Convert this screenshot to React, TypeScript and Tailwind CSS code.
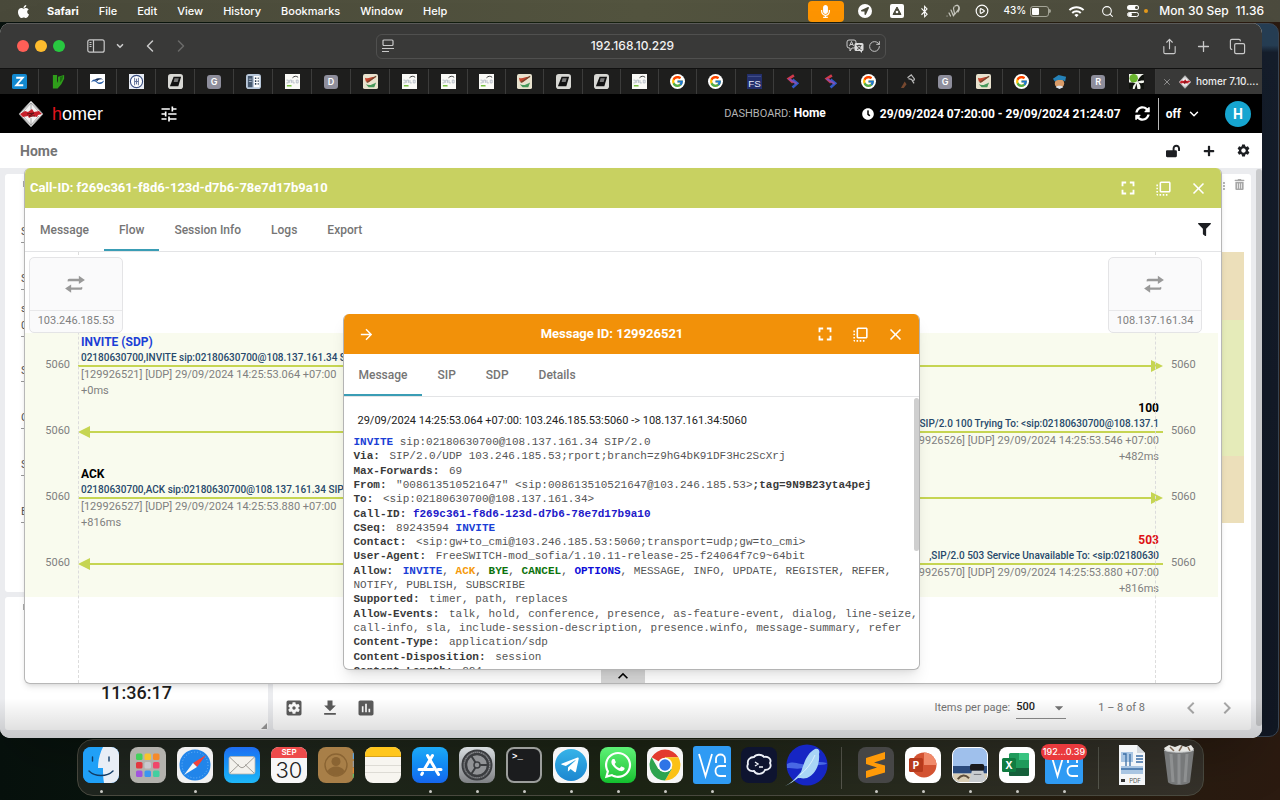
import React from "react";
import { FaBluetoothB, FaApple, FaClock, FaFilter, FaLockOpen, FaLocationArrow, FaMicrophone, FaPlus, FaSyncAlt, FaTrashAlt, FaWhatsapp, FaTelegramPlane } from "react-icons/fa";
import { FcGoogle } from "react-icons/fc";
import {
  MdArrowDropDown, MdArrowForward, MdAssessment, MdChevronLeft, MdChevronRight, MdClose, MdFileDownload,
  MdFlipToFront, MdFullscreen, MdKeyboardArrowUp, MdMoreVert, MdSettings, MdSettingsApplications, MdTune, MdWifi,
} from "react-icons/md";
import { ChevronDown, ChevronLeft, ChevronRight, CirclePlay, Copy, Plus, RotateCw, Search, Share, X } from "lucide-react";

/* ---------- macOS menu bar ---------- */

function MenuBar() {
  const menus = ["File", "Edit", "View", "History", "Bookmarks", "Window", "Help"];
  return (
    <header className="flex h-[22px] shrink-0 items-center justify-between bg-linear-to-r from-[#49493a] via-[#53543f] to-[#4b4a3d] pr-4 pl-4 font-[Inter,sans-serif] text-xs font-medium text-white">
      <nav className="flex items-center gap-5 text-[11px] whitespace-nowrap" aria-label="Menu bar">
        <FaApple className="-mr-1 size-[15px]" />
        <span className="font-bold">Safari</span>
        {menus.map((m) => (
          <span key={m}>{m}</span>
        ))}
      </nav>
      <div className="flex items-center whitespace-nowrap">
        <span className="mr-[14px] flex h-[21px] w-9 items-center justify-center rounded-[4px] bg-[#ff9500]">
          <FaMicrophone className="size-[13px]" />
        </span>
        <span className="mr-[18px] flex size-[14px] items-center justify-center rounded-full bg-white text-[#4b4b3c]">
          <FaLocationArrow className="size-2" />
        </span>
        <svg viewBox="0 0 14 14" className="mr-[14px] size-[14px]">
          <rect width="14" height="14" rx="2" fill="#fff" />
          <path d="M7 3 11 10.500H3Z" fill="#4b4b3c" stroke="#4b4b3c" strokeLinejoin="round" />
          <circle cx="7" cy="8" r="1.300" fill="#fff" />
        </svg>
        <FaBluetoothB className="mr-[14px] size-[13px]" />
        <svg viewBox="0 0 16 16" className="mr-[14px] size-4" fill="none" stroke="#c9c9c0" strokeWidth="1.200" strokeLinecap="round">
          <path d="M2 13h.1M4 10l1.500 3M6 7l2.500 6M9 4c-2 2 2 6 0 8M10 3c3-2 5 1 3 4l-3 4M12 2c3 1 3 4 1 7" />
        </svg>
        <CirclePlay className="mr-[15px] size-[14px]" />
        <span className="mr-1 text-[10px]">43%</span>
        <span className="flex h-[11px] w-[19px] rounded-[3px] border border-[#a5a598] p-px">
          <span className="w-[7px] rounded-[1px] bg-white" />
        </span>
        <span className="mr-[17px] h-1 w-[2px] rounded-r bg-[#a5a598]" />
        <MdWifi className="mr-4 size-[17px]" />
        <Search className="mr-3 size-[13px]" />
        <svg viewBox="0 0 14 14" className="mr-1 size-[14px]">
          <rect x="1" y="1" width="12" height="5" rx="2.500" fill="#fff" />
          <circle cx="10.500" cy="3.500" r="1.500" fill="#4b4b3c" />
          <rect x="1.500" y="8.500" width="11" height="4" rx="2" fill="none" stroke="#fff" />
          <circle cx="4" cy="10.500" r="2" fill="#fff" />
        </svg>
        <span className="mr-[11px] size-1 rounded-full bg-[#e59a1c]" />
        <span className="mr-[7px]">Mon 30 Sep</span>
        <span>11.36</span>
      </div>
    </header>
  );
}

/* ---------- Safari toolbar and tabs ---------- */

function Toolbar() {
  return (
    <div className="grid h-[45px] shrink-0 grid-cols-[1fr_510px_1fr] items-center border-t border-[#5a5a59] bg-[#393938] text-[#c9c9c9]">
      <div className="flex items-center pl-[17px]">
        <span className="mr-[6px] size-3 rounded-full bg-[#ff5f57]" />
        <span className="mr-[6px] size-3 rounded-full bg-[#febc2e]" />
        <span className="mr-[22px] size-3 rounded-full bg-[#28c840]" />
        <button aria-label="Sidebar" className="mr-[10px]">
          <svg viewBox="0 0 18 14" className="h-[14px] w-[18px]" fill="none" stroke="currentColor" strokeWidth="1.200">
            <rect x="0.800" y="0.800" width="16.400" height="12.400" rx="2" />
            <path d="M6.500 1v12M2.500 3.500h2M2.500 5.500h2M2.500 7.500h2" />
          </svg>
        </button>
        <button aria-label="Tab groups" className="mr-[15px]">
          <ChevronDown className="size-[10px]" strokeWidth={4} />
        </button>
        <button aria-label="Back" className="mr-[11px]">
          <ChevronLeft className="size-5" strokeWidth={1.800} />
        </button>
        <button aria-label="Forward" disabled className="text-[#6a6a69]">
          <ChevronRight className="size-5" strokeWidth={1.800} />
        </button>
      </div>
      <div className="flex h-[25px] items-center rounded-[6px] border border-[#50504f] px-1">
        <svg viewBox="0 0 14 14" className="size-[14px]" fill="none" stroke="currentColor" strokeWidth="1.200">
          <rect x="2" y="1" width="10" height="5.500" rx="1" />
          <path d="M1 9.500h12M1 12.500h7" />
        </svg>
        <input
          aria-label="Address"
          defaultValue="192.168.10.229"
          className="ml-6 min-w-0 flex-1 bg-transparent text-center font-[Inter,sans-serif] text-xs font-medium text-[#f2f2f2] outline-none"
        />
        <svg viewBox="0 0 18 14" className="mr-1 h-[14px] w-[18px]">
          <path d="M3 1h5a2 2 0 0 1 2 2v4a2 2 0 0 1-2 2H6l-2 3V9H3a2 2 0 0 1-2-2V3a2 2 0 0 1 2-2Z" fill="none" stroke="#c9c9c9" />
          <path d="M3.500 7 5.500 2.500 7.500 7M4 5.500h3" fill="none" stroke="#c9c9c9" />
          <path d="M10 4h6a1.500 1.500 0 0 1 1.500 1.500v5A1.500 1.500 0 0 1 16 12v2l-2-2h-4a1.500 1.500 0 0 1-1.500-1.500v-5A1.500 1.500 0 0 1 10 4Z" fill="#dcdcdc" />
          <path d="M10.500 6.500h5M13 5.500v1M11 10.500c2-.5 3.500-2 3.500-4M11.500 7c.5 1.500 2 3 4 3.500" fill="none" stroke="#393938" strokeWidth=".9" />
        </svg>
        <button aria-label="Reload">
          <RotateCw className="size-[13px]" strokeWidth={1.800} />
        </button>
      </div>
      <div className="flex items-center justify-end gap-[17px] pr-4">
        <button aria-label="Share"><Share className="size-[17px]" strokeWidth={1.600} /></button>
        <button aria-label="New tab"><Plus className="size-[17px]" strokeWidth={1.800} /></button>
        <button aria-label="Tab overview"><Copy className="size-[17px]" strokeWidth={1.700} /></button>
      </div>
    </div>
  );
}

function LetterIcon({ letter }: { letter: string }) {
  return (
    <span className="flex size-[14px] items-center justify-center rounded-[3px] bg-[#8e8e9c] font-[Inter,sans-serif] text-[9px] font-semibold text-white">
      {letter}
    </span>
  );
}

function Favicon({ kind }: { kind: string }) {
  if (kind.length === 1) return <LetterIcon letter={kind} />;
  if (kind === "google")
    return (
      <span className="flex size-[15px] items-center justify-center rounded-full bg-white">
        <FcGoogle className="size-[13px]" />
      </span>
    );
  return (
    <svg viewBox="0 0 16 16" className="size-[15px]">
      {kind === "zabbix" && (
        <>
          <rect width="16" height="16" rx="2" fill="#1289d0" />
          <path d="M4.500 4h7L4.500 12h7.500" fill="none" stroke="#fff" strokeWidth="2" />
        </>
      )}
      {kind === "vtiger" && (
        <>
          <path d="M2 1h4.500v6.500l1 2V3L14 1v4l-3 6-4 4.500H2Z" fill="#2f9e1a" />
          <path d="M9.500 3 13 2l-1 4-2.500 3Z" fill="#1c6d12" />
        </>
      )}
      {kind === "wave" && (
        <>
          <rect width="16" height="16" fill="#fff" />
          <path d="M1 9c2-4 4-4 6-1.500s5 2 8-.5c-1 4-5 5-8 2-2-2-4-1.500-6 0Z" fill="#2a5fa8" />
          <path d="M5 6c3-2 7-2 9 0-3-1-5 0-6 1.500Z" fill="#14305e" />
        </>
      )}
      {kind === "ring" && (
        <>
          <rect width="16" height="16" fill="#e9edf5" />
          <circle cx="8" cy="8" r="6.500" fill="#fff" stroke="#3a4e80" strokeWidth="1.200" />
          <path d="M6 4v8M8 5v6M10 4v8M6 8h4" stroke="#5b6a92" fill="none" />
        </>
      )}
      {kind === "box" && (
        <>
          <rect width="16" height="16" rx="3" fill="#d8d8d4" />
          <path d="M6 3h8l-3 10H2Z" fill="#111" />
          <path d="M7 4.500h4.500l-1.200 4H6Z" fill="#777" />
        </>
      )}
      {kind === "server" && (
        <>
          <rect width="16" height="16" rx="3" fill="#b9c8da" />
          <path d="M2 2h5v12H2Z" fill="#46586e" />
          <path d="M8.500 2h6v12h-6Z" fill="#fff" />
          <path d="M9.500 4.500h1.500M12.500 4.500h1M9.500 7.500h1.500M12.500 7.500h1M9.500 10.500h1.500M12.500 10.500h1" stroke="#26384e" strokeWidth="1.800" />
          <path d="M3 5.500h3M3 8h3" stroke="#aebccd" />
        </>
      )}
      {kind === "sheet" && (
        <>
          <rect width="16" height="16" fill="#fafaf7" />
          <path d="M8 4c2-2 4-2 6-.5" fill="none" stroke="#333" />
          <path d="M1.500 6.500h2v3h-2M5 9.500v-3h2v3M8.500 6.500v3h2M12 6.500h2v3h-2Z" fill="none" stroke="#a9b2be" strokeWidth=".8" />
          <path d="M2 12.500h4l1 .5" fill="none" stroke="#79c143" strokeWidth="1.500" />
        </>
      )}
      {kind === "flag" && (
        <>
          <rect width="16" height="16" rx="2" fill="#e8e2ce" />
          <path d="M2 4c4 2 7-2 12-1L6 9 3 8Z" fill="#c5442d" />
          <path d="M3 11c4 2 7 0 11-2l-2 5H6Z" fill="#47985a" />
          <path d="M4 9 14 2.500" stroke="#6d4a30" strokeWidth="1.200" />
        </>
      )}
      {kind === "fs" && (
        <>
          <rect width="16" height="16" fill="#232f6b" />
          <path d="M1 2.500h14" stroke="#4b5791" />
          <text x="8" y="14" textAnchor="middle" fontSize="10.500" fontFamily="Liberation Sans, sans-serif" fill="#e4e8fa">FS</text>
        </>
      )}
      {kind === "swirl" && (
        <>
          <path d="M9.500 1.500 4 5l4.500 4" fill="none" stroke="#d13a4b" strokeWidth="2.800" />
          <path d="M8 6 13 10l-5 4.500" fill="none" stroke="#3159c8" strokeWidth="2.800" />
          <path d="M4 5 12.500 10.500" stroke="#8550b0" strokeWidth="2" />
        </>
      )}
      {kind === "tools" && (
        <>
          <path d="M1 15 5 8l2 3-3 4Z" fill="#76482f" />
          <path d="M8 4 12 1l4 5-3 1 2 3M9 5l4 1" fill="none" stroke="#b9b9b9" strokeWidth="1.300" />
        </>
      )}
      {kind === "avatar" && (
        <>
          <circle cx="8" cy="10" r="5" fill="#d89b68" />
          <path d="M1 5 7 1l8 2-1 5c-3-2-8-2-11 0Z" fill="#2582b8" />
          <path d="M4 14c2-2 6-2 8 0l-4 2Z" fill="#d9e2ec" />
        </>
      )}
      {kind === "clover" && (
        <>
          <rect width="16" height="16" fill="#f4f6ef" />
          <circle cx="5" cy="4.500" r="4.500" fill="#69b42e" />
          <path d="M16 0c-4 2-6 5-7 8 3-1 6-1 7-1ZM0 9c3 0 5 0 7 1-2 1-3 3-3 6H0ZM10 9c2 1 4 1 6 0v7h-4c1-2 0-5-2-7ZM8 10l1 6H6Z" fill="#10130e" />
        </>
      )}
    </svg>
  );
}

function FaviconTab({ kind }: { kind: string }) {
  return (
    <span className="flex flex-1 items-center justify-center border-r border-[#3c3c3b]">
      <Favicon kind={kind} />
    </span>
  );
}

function TabStrip() {
  const first = ["zabbix", "vtiger", "wave", "ring", "box", "G", "server", "sheet", "D", "flag", "sheet", "sheet"];
  const second = ["sheet", "flag", "box", "box", "sheet", "google", "google", "fs", "swirl", "swirl", "google", "tools", "G", "flag", "google", "avatar", "R", "clover"];
  return (
    <div className="flex h-[26px] shrink-0 border-t border-[#111] bg-[#1e1e1d]">
      <div className="flex flex-[468]">
        {first.map((k, i) => <FaviconTab key={i} kind={k} />)}
      </div>
      <div className="flex flex-[688]">
        {second.map((k, i) => <FaviconTab key={i} kind={k} />)}
      </div>
      <div className="flex w-[106px] items-center bg-[#393938] pl-[6px] font-[Inter,sans-serif] text-[10px] font-medium whitespace-nowrap text-[#ececec]">
        <X className="mr-[6px] size-[10px] text-[#a0a0a0]" />
        <HomerMark className="mr-1 size-[14px]" />
        homer 7.10....
      </div>
    </div>
  );
}

/* ---------- Homer application ---------- */

function HomerMark({ className }: { className: string }) {
  return (
    <svg viewBox="0 0 26 28" className={className}>
      <path d="M13 1 25 14 13 27 1 14Z" fill="#f4f4f4" stroke="#8d8d8d" />
      <path d="m4 13 9-10 9 10M5 16l8 9 8-9M13 3v7M13 18v8" fill="none" stroke="#888" strokeWidth=".7" />
      <path d="m2 14 5-3 3 1 4-3 2 3 5-1 3 3-4 1-1 2-4-1-4 2-1-2-5 1Z" fill="#c8202b" />
      <path d="m9 14 7-1-5 3 6 0" fill="none" stroke="#5e1014" strokeWidth="1" />
    </svg>
  );
}

function AppHeader() {
  return (
    <div className="flex h-[39px] shrink-0 items-center bg-black pr-[11px] pl-[18px] text-white">
      <HomerMark className="mr-2 h-7 w-[26px]" />
      <span className="w-[50px] font-['Liberation_Sans',sans-serif] text-lg">
        <span className="text-[#e3141e]">h</span>omer
      </span>
      <button aria-label="Preferences" className="ml-[57px]"><MdTune className="size-5" /></button>
      <span className="ml-auto text-[11px] whitespace-nowrap text-[#b4b4b4]">
        DASHBOARD: <span className="text-xs font-bold text-white">Home</span>
      </span>
      <FaClock className="mr-[6px] ml-[36px] size-3" />
      <span className="text-xs font-bold whitespace-nowrap">29/09/2024 07:20:00 - 29/09/2024 21:24:07</span>
      <button aria-label="Refresh" className="ml-[14px]"><FaSyncAlt className="size-[15px]" /></button>
      <span className="mr-[7px] ml-2 h-8 w-px bg-[#b9b9b9]" />
      <button className="flex items-center gap-[6px] text-xs font-bold">
        off <ChevronDown className="size-[14px]" strokeWidth={2.500} />
      </button>
      <span className="ml-6 flex size-[26px] items-center justify-center rounded-full bg-[#16a5d0] text-sm font-bold">H</span>
    </div>
  );
}

function PageBar() {
  return (
    <div className="flex h-[35px] shrink-0 items-center bg-white pr-[11px] pl-5 text-[#1d1f23]">
      <h1 className="mr-auto text-sm font-bold text-[#757575]">Home</h1>
      <button aria-label="Unlock dashboard"><FaLockOpen className="size-[14px]" /></button>
      <button aria-label="Add widget" className="mr-[21px] ml-[23px]"><FaPlus className="size-3" /></button>
      <button aria-label="Dashboard settings"><MdSettings className="size-[15px]" /></button>
    </div>
  );
}

function SearchWidget() {
  const fields = [
    ["S", "h-0"], ["S", "h-[29px]"], ["s", "h-3"], ["0", "h-1"],
    ["S", "h-[27px]"], ["C", "h-[29px]"], ["S", "h-[29px]"], ["E", "h-[29px]"],
  ];
  return (
    <section className="flex-1 overflow-hidden rounded-[3px] bg-white pt-[7px] pl-[16px] text-[11px] leading-[13px] text-[#555]">
      <div className="mb-[38px] ml-[2px] h-[6px] w-1 bg-[#aaa]" />
      {fields.map(([letter, gap], i) => (
        <div key={i}>
          <div className={gap} />
          <div className={letter === "s" ? "h-[13px] w-10" : "h-[18px] w-10 border-b border-[#999]"}>{letter}</div>
        </div>
      ))}
    </section>
  );
}

function ResultsWidget() {
  return (
    <section className="flex min-w-0 flex-1 flex-col rounded-[3px] bg-white">
      <div className="flex h-[78px] items-start justify-end pt-[5px] pr-[6px] text-[#a7a7a7]">
        <MdMoreVert className="mt-px mr-1 size-3" />
        <FaTrashAlt className="size-[11px]" />
      </div>
      <div className="mr-[7px] h-[68px] bg-[#ecdfba]" />
      <div className="mr-[7px] h-[136px] bg-[#e5ebb9]" />
      <div className="mr-[7px] h-[67px] bg-[#ecdfba]" />
      <div className="mt-auto flex h-11 items-center pr-[15px] pl-[11px] text-[11px] whitespace-nowrap text-[#757575]">
        <button aria-label="Table settings" className="mr-4"><MdSettingsApplications className="size-5 text-[#5c5c5c]" /></button>
        <button aria-label="Download" className="mr-4"><MdFileDownload className="size-5 text-[#5c5c5c]" /></button>
        <button aria-label="Chart"><MdAssessment className="size-5 text-[#5c5c5c]" /></button>
        <label htmlFor="page-size" className="mr-[6px] ml-auto">Items per page:</label>
        <span className="mr-8 flex h-[22px] w-[50px] items-center border-b border-[#8d8d8d]">
          <select id="page-size" className="w-full appearance-none bg-transparent font-medium text-[#222]">
            <option>500</option>
          </select>
          <MdArrowDropDown className="-mr-[3px] size-5 shrink-0" />
        </span>
        <span className="mr-[34px]">1 – 8 of 8</span>
        <button aria-label="Previous page" disabled className="mr-3 text-[#aaa]"><MdChevronLeft className="size-6" /></button>
        <button aria-label="Next page" disabled className="-mr-[3px] text-[#aaa]"><MdChevronRight className="size-6" /></button>
      </div>
    </section>
  );
}

function WindowButtons() {
  return (
    <div className="flex items-center text-white">
      <button aria-label="Full screen" className="mr-[15px]"><MdFullscreen className="size-[22px]" /></button>
      <button aria-label="Bring to front" className="mr-4"><MdFlipToFront className="size-[19px]" /></button>
      <button aria-label="Close"><MdClose className="size-[19px]" /></button>
    </div>
  );
}

function PanelTabs({ tabs, active }: { tabs: string[]; active: string }) {
  return (
    <div role="tablist" className="flex h-full text-xs font-medium text-[#757575]">
      {tabs.map((t) => (
        <button
          key={t}
          role="tab"
          aria-selected={t === active}
          className={t === active ? "border-b-2 border-[#3a9db5] px-[15px] pt-[2px]" : "border-b-2 border-transparent px-[15px] pt-[2px]"}
        >
          {t}
        </button>
      ))}
    </div>
  );
}

function HostBox({ ip }: { ip: string }) {
  return (
    <div className="relative z-10 flex h-[76px] w-[94px] flex-col rounded-[5px] border border-[#e4e4e6] bg-[#fafafb] text-[#808080]">
      <div className="flex flex-1 items-center justify-center border-b border-[#e8e8ea] pr-[2px]">
        <svg viewBox="0 0 20 20" className="size-[22px]" fill="#999">
          <path d="M3.500 8C3 6 3.500 5.200 5 5.200h8.500V2.500l5.500 3.900-5.500 3.600V7.400H5.500c-1 0-1.500 0-2 .6Z" />
          <path d="M16.500 12.500c.5 2 0 2.800-1.500 2.800H6.500V18L1 14.100l5.500-3.600v2.600h8c1 0 1.500 0 2-.6Z" />
        </svg>
      </div>
      <div className="flex h-[21px] items-center justify-center text-[11px]">{ip}</div>
    </div>
  );
}

type Packet = { title: string; tone: string; summary: string; meta: string; delay: string; back?: boolean };

const packets: Packet[] = [
  { title: "INVITE (SDP)", tone: "text-[#1b3fd6]", summary: "02180630700,INVITE sip:02180630700@108.137.161.34 S", meta: "[129926521] [UDP] 29/09/2024 14:25:53.064 +07:00", delay: "+0ms" },
  { title: "100", tone: "text-black", summary: ",SIP/2.0 100 Trying To: <sip:02180630700@108.137.1", meta: "[129926526] [UDP] 29/09/2024 14:25:53.546 +07:00", delay: "+482ms", back: true },
  { title: "ACK", tone: "text-black", summary: "02180630700,ACK sip:02180630700@108.137.161.34 SIP/", meta: "[129926527] [UDP] 29/09/2024 14:25:53.880 +07:00", delay: "+816ms" },
  { title: "503", tone: "text-[#dd1216]", summary: ",SIP/2.0 503 Service Unavailable To: <sip:02180630", meta: "[129926570] [UDP] 29/09/2024 14:25:53.880 +07:00", delay: "+816ms", back: true },
];

function FlowRow({ p }: { p: Packet }) {
  return (
    <div className="flex h-[66px] bg-[#f9fbee] text-[11px] text-[#808080]">
      <div className="w-[53px] pr-2 text-right leading-[64px]">5060</div>
      <div className={p.back ? "min-w-0 flex-1 pt-px text-right" : "min-w-0 flex-1 pt-px"}>
        <div className={`h-4 pr-1 pl-[3px] text-xs leading-4 font-bold ${p.tone}`}>{p.title}</div>
        <div className="h-[15px] pr-1 pl-[3px] text-[10px] leading-[15px] font-medium text-[#27496b]">{p.summary}</div>
        <div className="flex h-[2px] items-center text-[#c6d552]">
          {p.back && <svg viewBox="0 0 12 12" className="-my-[5px] size-3 shrink-0" fill="currentColor"><path d="M12 0v12L0 6Z" /></svg>}
          <span className="h-[2px] flex-1 bg-current" />
          {!p.back && <svg viewBox="0 0 12 12" className="-my-[5px] size-3 shrink-0" fill="currentColor"><path d="M0 0v12l12-6Z" /></svg>}
        </div>
        <div className="pr-1 pl-[3px] leading-4">{p.meta}</div>
        <div className="pr-1 pl-[3px] leading-4">{p.delay}</div>
      </div>
      <div className="w-[55px] pl-2 leading-[64px]">5060</div>
    </div>
  );
}

function CallWindow() {
  return (
    <section className="absolute top-0 right-10 bottom-[54px] left-6 flex flex-col overflow-hidden rounded-md border border-t-0 border-[#b7b7b7] bg-white shadow-md">
      <div className="flex h-10 shrink-0 items-center justify-between bg-[#c8d161] pr-[13px] pl-[5px]">
        <h2 className="text-[13px] font-bold text-white">Call-ID: f269c361-f8d6-123d-d7b6-78e7d17b9a10</h2>
        <WindowButtons />
      </div>
      <div className="flex h-11 shrink-0 items-center justify-between border-b border-[#e3e4e6] pr-[10px]">
        <PanelTabs tabs={["Message", "Flow", "Session Info", "Logs", "Export"]} active="Flow" />
        <button aria-label="Filter"><FaFilter className="size-[13px] text-[#1d1f23]" /></button>
      </div>
      <div className="relative flex flex-1 flex-col">
        <div className="absolute inset-y-0 right-[65px] left-[53px] z-[1] border-x border-dashed border-[#dcdcdc]" />
        <div className="flex h-[81px] items-start justify-between pt-[5px] pr-[19px] pl-1">
          <HostBox ip="103.246.185.53" />
          <HostBox ip="108.137.161.34" />
        </div>
        <div className="mr-[3px]">
          {packets.map((p) => <FlowRow key={p.meta} p={p} />)}
        </div>
        <button aria-label="Expand" className="mt-auto flex h-[14px] w-11 items-center justify-center self-center bg-[#d6d6d6] text-black">
          <MdKeyboardArrowUp className="size-5" />
        </button>
      </div>
    </section>
  );
}

const K = ({ children }: { children: React.ReactNode }) => <b className="mr-[3px] text-[#3a3a3a]">{children}</b>;
const M = ({ c, children }: { c: string; children: React.ReactNode }) => <b className={c}>{children}</b>;

const sipLines: React.ReactNode[] = [
  <><M c="text-[#1b3fd6]">INVITE</M> sip:02180630700@108.137.161.34 SIP/2.0</>,
  <><K>Via:</K> SIP/2.0/UDP 103.246.185.53;rport;branch=z9hG4bK91DF3Hc2ScXrj</>,
  <><K>Max-Forwards:</K> 69</>,
  <><K>From:</K> "008613510521647" &lt;sip:008613510521647@103.246.185.53&gt;<M c="text-[#3a3a3a]">;tag=9N9B23yta4pej</M></>,
  <><K>To:</K> &lt;sip:02180630700@108.137.161.34&gt;</>,
  <><M c="text-[#3a3a3a]">Call-ID:</M> <M c="text-[#2118c9]">f269c361-f8d6-123d-d7b6-78e7d17b9a10</M></>,
  <><K>CSeq:</K> 89243594 <M c="text-[#1b3fd6]">INVITE</M></>,
  <><K>Contact:</K> &lt;sip:gw+to_cmi@103.246.185.53:5060;transport=udp;gw=to_cmi&gt;</>,
  <><K>User-Agent:</K> FreeSWITCH-mod_sofia/1.10.11-release-25-f24064f7c9~64bit</>,
  <><K>Allow:</K> <M c="text-[#1b3fd6]">INVITE</M>, <M c="text-[#f59a0c]">ACK</M>, <M c="text-[#0b720b]">BYE</M>, <M c="text-[#0b720b]">CANCEL</M>, <M c="text-[#0d0dd8]">OPTIONS</M>, MESSAGE, INFO, UPDATE, REGISTER, REFER,</>,
  <>NOTIFY, PUBLISH, SUBSCRIBE</>,
  <><K>Supported:</K> timer, path, replaces</>,
  <><K>Allow-Events:</K> talk, hold, conference, presence, as-feature-event, dialog, line-seize,</>,
  <>call-info, sla, include-session-description, presence.winfo, message-summary, refer</>,
  <><K>Content-Type:</K> application/sdp</>,
  <><K>Content-Disposition:</K> session</>,
  <><K>Content-Length:</K> 224</>,
];

function MessageWindow() {
  return (
    <section className="absolute inset-x-0 top-[146px] bottom-[68px] mx-auto flex w-[577px] flex-col overflow-hidden rounded-md border border-t-0 border-[#b4b4b4] bg-white shadow-lg">
      <div className="flex h-10 shrink-0 items-center bg-[#f29109] px-[14px] text-white">
        <button aria-label="Forward message"><MdArrowForward className="size-[17px]" /></button>
        <h2 className="flex-1 pl-9 text-center text-[13px] font-bold">Message ID: 129926521</h2>
        <WindowButtons />
      </div>
      <div className="h-[43px] shrink-0 border-b border-[#e3e4e6]">
        <PanelTabs tabs={["Message", "SIP", "SDP", "Details"]} active="Message" />
      </div>
      <div className="flex min-h-0 flex-1 overflow-hidden">
        <div className="min-w-0 flex-1 pt-4 pl-[10px]">
          <p className="mb-[6px] pl-1 text-[11px] leading-4 text-[#222]">29/09/2024 14:25:53.064 +07:00: 103.246.185.53:5060 -&gt; 108.137.161.34:5060</p>
          <div className="grid h-[243px] auto-rows-fr items-center font-['Liberation_Mono',monospace] text-[11px] leading-[14px] whitespace-pre text-[#555]">
            {sipLines.map((l, i) => <div key={i}>{l}</div>)}
          </div>
        </div>
        <div className="mt-px h-[153px] w-[5px] rounded-full bg-[#cfcfcf]" />
      </div>
    </section>
  );
}

function BrowserWindow() {
  return (
    <main className="relative mt-px mr-[18px] flex flex-1 flex-col overflow-hidden rounded-[10px] bg-white shadow-2xl">
      <Toolbar />
      <TabStrip />
      <div className="flex flex-1 flex-col font-[Roboto,sans-serif]">
        <AppHeader />
        <PageBar />
        <div className="relative flex flex-1 bg-[#ebecef]">
          <div className="flex min-w-0 flex-1 gap-[5px] pt-[6px] pr-[5px] pb-2 pl-[5px]">
            <div className="flex w-[263px] flex-col gap-[5px]">
              <SearchWidget />
              <section className="flex h-[133px] flex-col rounded-[3px] bg-white">
                <div className="mt-[7px] ml-[18px] h-[6px] w-1 bg-[#aaa]" />
                <div className="mt-auto text-center text-lg leading-[60px] font-medium text-[#1e1e1e]">11:36:17</div>
                <svg viewBox="0 0 6 6" className="mr-px mb-px size-[6px] self-end"><path d="M6 0v6H0Z" fill="#9a9a9a" /></svg>
              </section>
            </div>
            <ResultsWidget />
          </div>
          <div className="mt-px mb-3 w-[6px] rounded bg-[#c9cacc]" />
          <div className="pointer-events-none absolute inset-x-0 bottom-0 h-10 bg-linear-to-b from-transparent to-black/15" />
          <CallWindow />
          <MessageWindow />
        </div>
      </div>
    </main>
  );
}

/* ---------- Dock ---------- */

function Tile({ tone, children }: { tone: string; children?: React.ReactNode }) {
  return <span className={`flex size-9 items-center justify-center overflow-hidden rounded-lg ${tone}`}>{children}</span>;
}

function VncTile() {
  return (
    <span className="flex size-[38px] items-center justify-center rounded-[3px] bg-[#2f9bf4]">
      <svg viewBox="0 0 38 38" className="size-[38px]" fill="none" stroke="#fff" strokeWidth="1.800">
        <path d="m6 8 6.500 22L19 8M23 17v-4c0-6 9-6 9 0v4M33 20h-6c-6 0-6 10 0 10h6" />
      </svg>
    </span>
  );
}

const launchpadColours = ["#43d15c", "#f7c52d", "#f58a2a", "#e2373f", "#c9c9cf", "#f0486b", "#a155dd", "#3b97f0", "#42cfa0"];

const dockLeft: { name: string; open?: boolean; icon: React.ReactNode }[] = [
  {
    name: "Finder", open: true,
    icon: (
      <Tile tone="bg-[#1c8ff5]">
        <svg viewBox="0 0 36 36" className="size-9">
          <path d="M0 0h20c-3 6-4 12-4 19h4c0 6 0 11 1 17H0Z" fill="#20a0f7" />
          <path d="M20 0h16v36H21c-1-5-1-10-1-15h-5C15 13 17 6 20 0Z" fill="#e8eef6" />
          <path d="M9.500 10v4M26 10v4M6 24c6 6 18 6 24 0" fill="none" stroke="#123c66" strokeWidth="1.400" strokeLinecap="round" />
        </svg>
      </Tile>
    ),
  },
  {
    name: "Launchpad",
    icon: (
      <Tile tone="bg-[#b3b2ad]">
        <svg viewBox="0 0 36 36" className="size-9">
          {launchpadColours.map((c, i) => (
            <rect key={c} x={6 + (i % 3) * 8.500} y={6.500 + Math.floor(i / 3) * 8.500} width="6.500" height="6.500" rx="1.500" fill={c} />
          ))}
        </svg>
      </Tile>
    ),
  },
  {
    name: "Safari", open: true,
    icon: (
      <Tile tone="bg-[#f1f1f1]">
        <svg viewBox="0 0 36 36" className="size-9">
          <circle cx="18" cy="18" r="15.500" fill="#2185ea" />
          <circle cx="18" cy="18" r="13" fill="none" stroke="#6fb5f5" strokeDasharray="1 2" />
          <path d="m29 8-9 12-4-4Z" fill="#f2423a" />
          <path d="M7 28 16 16l4 4Z" fill="#f6f6f6" />
        </svg>
      </Tile>
    ),
  },
  {
    name: "Mail",
    icon: (
      <Tile tone="bg-linear-to-b from-[#1e6df2] to-[#1fb8f8]">
        <svg viewBox="0 0 36 36" className="size-9" stroke="#b5b2ac" strokeWidth=".8">
          <rect x="5" y="9.500" width="26" height="17.500" rx="2" fill="#f3f1ec" />
          <path d="m6 26 9-8.500M30 26l-9-8.500M6 10.500l10 9.500q2 1.500 4 0l10-9.500" fill="none" stroke="#8b8881" />
        </svg>
      </Tile>
    ),
  },
  {
    name: "Calendar",
    icon: (
      <span className="flex size-9 flex-col overflow-hidden rounded-lg bg-[#f7f7f7] text-center">
        <span className="bg-[#ee4b4b] text-[8px] leading-[11px] font-semibold text-white">SEP</span>
        <span className="text-[22px] leading-6 font-light text-[#222]">30</span>
      </span>
    ),
  },
  {
    name: "Contacts",
    icon: (
      <Tile tone="bg-[#a87f48]">
        <svg viewBox="0 0 36 36" className="size-9">
          <circle cx="18" cy="18" r="11" fill="none" stroke="#8a6433" strokeWidth="1.400" />
          <circle cx="18" cy="14.500" r="4.500" fill="#8a6433" />
          <path d="M9.500 24c3-6 14-6 17 0-4 6-13 6-17 0Z" fill="#8a6433" />
          <path d="M35.500 6v6" stroke="#5ba3e0" strokeWidth="1.500" />
          <path d="M35.500 14v6" stroke="#9a9a9a" strokeWidth="1.500" />
          <path d="M35.500 21v5" stroke="#e08a35" strokeWidth="1.500" />
          <path d="M35.500 27v4" stroke="#5bc06a" strokeWidth="1.500" />
        </svg>
      </Tile>
    ),
  },
  {
    name: "Notes",
    icon: (
      <span className="flex size-9 flex-col overflow-hidden rounded-lg bg-[#f7f5f0]">
        <span className="h-[10px] border-b border-[#d8a21a] bg-[#ffc61c]" />
        <span className="mt-2 h-2 border-y border-[#dddbd5]" />
      </span>
    ),
  },
  { name: "App Store", open: true, icon: <Tile tone="bg-linear-to-b from-[#1daaf7] to-[#1666ee]">
      <svg viewBox="0 0 36 36" className="size-9" fill="none" stroke="#fff" strokeWidth="3" strokeLinecap="round">
        <path d="m15.500 8.500 11 19M20.500 8.500 12.500 22M7 22.500h14M26 22.500h3M10.500 26l-.8 1.400" />
      </svg>
    </Tile> },
  {
    name: "System Settings", open: true,
    icon: (
      <Tile tone="bg-linear-to-b from-[#d8dde0] to-[#808285]">
        <svg viewBox="0 0 36 36" className="size-9" fill="none" stroke="#3b3d40">
          <circle cx="18" cy="18" r="14.500" fill="#919396" strokeWidth="2" />
          <circle cx="18" cy="18" r="11" strokeWidth="2.500" />
          <circle cx="18" cy="18" r="13" strokeWidth="1" strokeDasharray="1 1" />
          <circle cx="18" cy="18" r="3" strokeWidth="1.500" />
          <path d="M21 18h8M16.500 15.500 12 8.500M16.500 20.500 12 27.500" strokeWidth="2" />
        </svg>
      </Tile>
    ),
  },
  { name: "Terminal", open: true, icon: (
      <Tile tone="border-2 border-[#9c9e9c] bg-[#1b1c1e]">
        <span className="h-6 w-6 text-left font-['Liberation_Mono',monospace] text-[9px] leading-[9px] font-bold text-white">&gt;_</span>
      </Tile>
    ) },
  { name: "Telegram", open: true, icon: (
      <Tile tone="bg-[#f5f6f7]">
        <span className="flex size-8 items-center justify-center rounded-full bg-linear-to-b from-[#37b3e8] to-[#1c87d0]">
          <FaTelegramPlane className="mr-[2px] size-5 text-white" />
        </span>
      </Tile>
    ) },
  { name: "WhatsApp", open: true, icon: <Tile tone="bg-linear-to-b from-[#5df276] to-[#10c02d]"><FaWhatsapp className="size-[30px] text-white" /></Tile> },
  {
    name: "Chrome", open: true,
    icon: (
      <Tile tone="bg-[#f6f6f6]">
        <svg viewBox="0 0 36 36" className="size-9">
          <path d="M18 18 4.600 10.300A15.500 15.500 0 0 1 31.400 10.300H18Z" fill="#e33b2e" />
          <path d="M31.400 10.300A15.500 15.500 0 0 1 18 33.500L24.700 22 18 10.300Z" fill="#fbc116" />
          <path d="M4.600 10.300A15.500 15.500 0 0 0 18 33.500L24.700 22 11.300 22Z" fill="#2da44e" />
          <circle cx="18" cy="18" r="7.300" fill="#fff" />
          <circle cx="18" cy="18" r="5.700" fill="#2f74e6" />
        </svg>
      </Tile>
    ),
  },
  { name: "VNC Viewer", open: true, icon: <VncTile /> },
  {
    name: "Termius",
    icon: (
      <Tile tone="bg-[#0e1430]">
        <svg viewBox="0 0 36 36" className="size-9" fill="none" stroke="#eef1f8" strokeWidth="1.800">
          <path d="M13 10c2-3 8-3 10 0 4-1 8 2 6 6 2 4-1 7-5 7-2 5-9 5-11 1-5 1-8-3-6-7-1-4 2-7 6-7Z" />
          <path d="m14 15 3 2-3 2M18 20h4" strokeWidth="1.400" />
        </svg>
      </Tile>
    ),
  },
  {
    name: "SeaMonkey",
    icon: (
      <svg viewBox="0 0 44 44" className="size-11">
        <circle cx="23" cy="22" r="20.500" fill="#1626c4" />
        <path d="M3 21c8-4 13 2 20 0s13-3 20-1c-1 3-12 1-20 4S8 25 3 25Z" fill="#4968e4" />
        <path d="M1 43c6-3 11-8 16-14 3-9 6-19 14-23 4-1 5 2 4 5 1 10-3 20-12 24-4 1-7 0-9 0-4 3-8 6-13 8Z" fill="#a9d5f6" />
        <path d="M16 32c6-5 12-12 15-20" fill="none" stroke="#d8effd" />
      </svg>
    ),
  },
];

const dockMiddle: { name: string; label?: string; icon: React.ReactNode }[] = [
  {
    name: "Sublime Text",
    icon: (
      <Tile tone="bg-[#464646]">
        <svg viewBox="0 0 36 36" className="size-9" fill="#ff9a08">
          <path d="M8 11 27 5v7L16 15.500l11 3v7L8 31v-7l11-3.500L8 17Z" />
        </svg>
      </Tile>
    ),
  },
  {
    name: "PowerPoint",
    icon: (
      <Tile tone="bg-white">
        <svg viewBox="0 0 36 36" className="size-9">
          <circle cx="19" cy="18" r="12.500" fill="#d35332" />
          <path d="M19 5.500A12.500 12.500 0 0 1 31.500 18H19Z" fill="#f08a6a" />
          <rect x="4" y="11" width="14" height="14" rx="1.500" fill="#b73a1c" />
          <text x="11" y="21.500" textAnchor="middle" fontSize="10" fontWeight="700" fontFamily="Inter, sans-serif" fill="#fff">P</text>
        </svg>
      </Tile>
    ),
  },
  {
    name: "Preview",
    icon: (
      <Tile tone="border border-white bg-[#9fc0ec]">
        <svg viewBox="0 0 36 36" className="size-9">
          <path d="M0 19h36v8H0Z" fill="#2a4a7c" />
          <path d="M0 27h36v9H0Z" fill="#d9cdb3" />
          <path d="M5 33c4-5 8-5 12-1" fill="none" stroke="#5e4f3c" strokeWidth="2" />
          <rect x="18" y="17" width="15" height="7" rx="2" fill="#1a1a1c" />
          <path d="M20 24h12l3 12H17Z" fill="#c8ccd0" />
          <path d="M22 28h8" stroke="#6e7278" />
        </svg>
      </Tile>
    ),
  },
  {
    name: "Excel",
    icon: (
      <Tile tone="bg-white">
        <svg viewBox="0 0 36 36" className="size-9">
          <rect x="10" y="6" width="20" height="23" rx="1.500" fill="#1f9a5b" />
          <path d="M20 6h8.500A1.500 1.500 0 0 1 30 7.500V13H20Z" fill="#38c481" />
          <path d="M10 21h20v6.500a1.500 1.500 0 0 1-1.500 1.500h-17a1.500 1.500 0 0 1-1.500-1.500Z" fill="#15603a" />
          <rect x="3" y="11" width="14" height="14" rx="1.500" fill="#107c41" />
          <text x="10" y="21.500" textAnchor="middle" fontSize="10" fontWeight="700" fontFamily="Inter, sans-serif" fill="#fff">X</text>
        </svg>
      </Tile>
    ),
  },
  { name: "VNC session", label: "192...0.39", icon: <VncTile /> },
];

function DockItem({ name, open, label, children }: { name: string; open?: boolean; label?: string; children: React.ReactNode }) {
  return (
    <button aria-label={name} className="relative flex h-full w-[47px] flex-col items-center">
      <span className="mt-[7px] flex h-9 items-center justify-center">{children}</span>
      {open && <span className="mt-[7px] size-[3px] rounded-full bg-[#c9c9c4]" />}
      {label && (
        <span className="absolute top-1 rounded-full bg-[#ea3a3d] px-[2px] text-[9px] leading-[16px] font-medium whitespace-nowrap text-white">{label}</span>
      )}
    </button>
  );
}

function Dock() {
  return (
    <footer className="mx-auto mt-[1px] mb-1 flex h-[57px] shrink-0 items-center rounded-2xl border border-[#4a4a40] bg-linear-to-r from-[#1f251f] via-[#1c2414] to-[#35312a] font-[Inter,sans-serif]">
      {dockLeft.map((d) => <DockItem key={d.name} name={d.name} open={d.open}>{d.icon}</DockItem>)}
      <span className="mx-[11px] h-[42px] w-px bg-[#55564c]" />
      {dockMiddle.map((d) => <DockItem key={d.name} name={d.name} open label={d.label}>{d.icon}</DockItem>)}
      <span className="mx-[10px] h-[42px] w-px bg-[#55564c]" />
      <DockItem name="Documents">
        <svg viewBox="0 0 28 42" className="h-[42px] w-7">
          <path d="M1 1h18l8 8v32H1Z" fill="#f4f6f8" />
          <path d="M19 1v8h8" fill="#d3d8dd" />
          <path d="M3 8h12v10H3ZM3 22h22v8H3Z" fill="#a9c5e2" />
          <path d="M5 10h3v12M12 10v12M3 25h22M18 12h7M18 15h7M18 18h7" fill="none" stroke="#3b6ea5" strokeWidth="1.300" />
          <rect x="3" y="35" width="4" height="3" fill="#333" />
          <text x="17" y="39" textAnchor="middle" fontSize="6" fontFamily="Inter, sans-serif" fill="#555">PDF</text>
        </svg>
      </DockItem>
      <DockItem name="Trash">
        <svg viewBox="0 0 34 42" className="h-[42px] w-[34px]">
          <path d="m2 4 5-3 6 2 5-2 6 2 5-2 3 4-4 4H5Z" fill="#e7e7e4" />
          <path d="m8 3 4 4M20 2l-3 5M26 3l2 4" stroke="#7d6753" strokeWidth="1.500" />
          <path d="M2 6c5 3 25 3 30 0l-4 32c-2 4-20 4-22 0Z" fill="#77797a" />
          <path d="M9 10l2 28M17 10v30M25 10l-2 28" fill="none" stroke="#8e9091" strokeWidth="3" />
          <path d="M2 6c5 3 25 3 30 0" fill="none" stroke="#c4c6c7" />
        </svg>
      </DockItem>
    </footer>
  );
}

export default function App() {
  return (
    <div className="relative flex min-h-screen flex-col overflow-hidden bg-linear-to-r from-[#07110d] via-[#16210f] to-[#2b1a10]">
      <div className="absolute top-[23px] right-px bottom-[63px] w-10 rounded-[10px] border border-[#3a4654] bg-linear-to-b from-[#263e54] from-3% via-[#151e2c] via-4% to-[#111824]" />
      <MenuBar />
      <BrowserWindow />
      <Dock />
    </div>
  );
}
